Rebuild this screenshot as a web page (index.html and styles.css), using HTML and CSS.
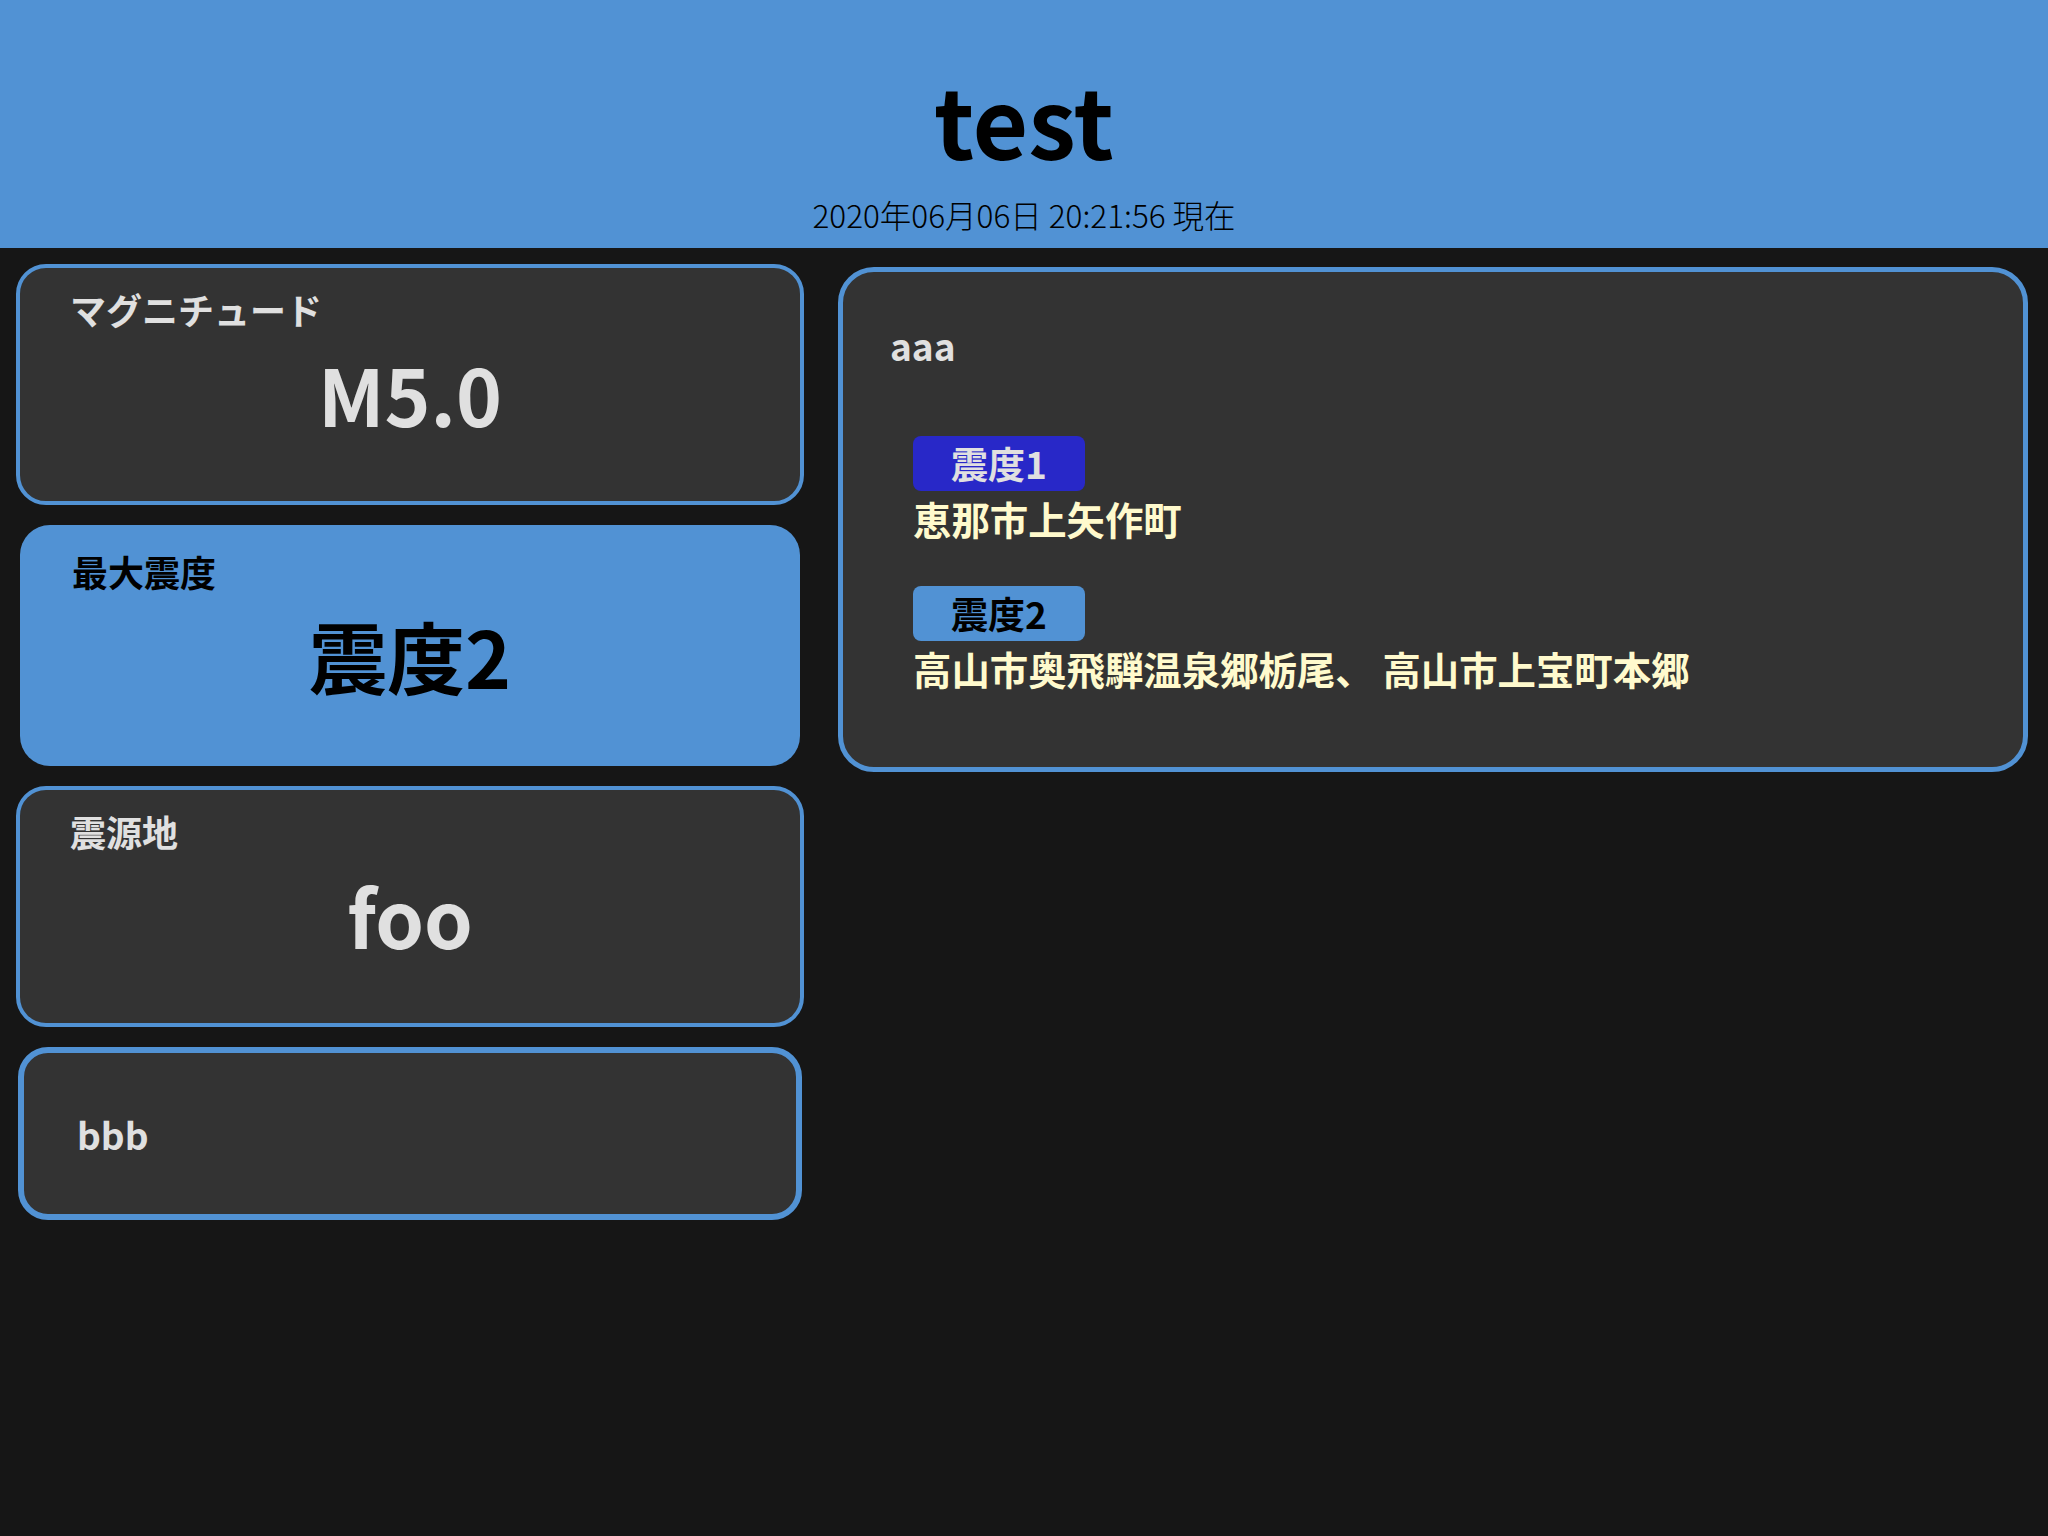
FILE: index.html
```html
<!DOCTYPE html>
<html lang="ja">
<head>
<meta charset="utf-8">
<title>test</title>
<link rel="stylesheet" href="styles.css">
</head>
<body>
<header class="header">
  <h1 class="title">test</h1>
  <div class="date">2020年06月06日 20:21:56 現在</div>
</header>
<main class="main">
  <section class="left">
    <div class="card card-mag">
      <div class="label">マグニチュード</div>
      <div class="value">M5.0</div>
    </div>
    <div class="card card-int">
      <div class="label">最大震度</div>
      <div class="value">震度2</div>
    </div>
    <div class="card card-epi">
      <div class="label">震源地</div>
      <div class="value">foo</div>
    </div>
    <div class="card card-bbb">
      <div class="plain">bbb</div>
    </div>
  </section>
  <section class="panel">
    <div class="plain">aaa</div>
    <ul class="areas">
      <li class="area">
        <div class="badge badge-1">震度1</div>
        <div class="places">恵那市上矢作町</div>
      </li>
      <li class="area">
        <div class="badge badge-2">震度2</div>
        <div class="places">高山市奥飛騨温泉郷栃尾、 高山市上宝町本郷</div>
      </li>
    </ul>
  </section>
</main>
</body>
</html>
```
FILE: styles.css
```css
* { box-sizing: border-box; }

html, body {
  margin: 0;
  padding: 0;
  background: #161616;
  font-family: "Noto Sans CJK JP", "Noto Sans", sans-serif;
  color: #e0e0e0;
}

.header {
  background: #5192d4;
  height: 248px;
  padding-top: 47px;
  text-align: center;
  color: #000;
}

.title {
  margin: 0;
  font-size: 96px;
  line-height: 144px;
  font-weight: 700;
}

.date {
  font-size: 31.5px;
  line-height: 46px;
  font-weight: 300;
}

.main {
  display: flex;
  align-items: flex-start;
  padding-top: 16px;
}

.left {
  width: 820px;
  display: flex;
  flex-direction: column;
  align-items: center;
  gap: 20px;
}

.card {
  background: #333333;
  border-radius: 30px;
}

.card-mag,
.card-epi {
  width: 788px;
  height: 241px;
  border: 4px solid #5192d4;
  padding: 15px 50px 0;
}

.card-int {
  width: 780px;
  height: 241px;
  background: #5192d4;
  padding: 20px 52px 0;
  color: #000;
}

.card-bbb {
  width: 784px;
  height: 173px;
  border: 6px solid #5192d4;
  padding-left: 53px;
  display: flex;
  align-items: center;
}

.label {
  font-size: 36px;
  line-height: 52px;
  font-weight: 700;
}

.value {
  font-size: 78px;
  line-height: 116px;
  font-weight: 700;
  text-align: center;
}

.plain {
  font-size: 37px;
  line-height: 58px;
  font-weight: 700;
}

.panel {
  width: 1190px;
  margin-left: 18px;
  margin-top: 3px;
  background: #333333;
  border: 5px solid #5192d4;
  border-radius: 36px;
  padding: 44px 46px 31px 47px;
}

.areas {
  list-style: none;
  margin: 62px 0 0;
  padding: 0 0 0 23px;
}

.area {
  margin-bottom: 40px;
}

.badge {
  width: 172px;
  height: 55px;
  border-radius: 8px;
  font-size: 37px;
  line-height: 55px;
  font-weight: 700;
  text-align: center;
}

.badge-1 {
  background: #2828c8;
  color: #e0e0e0;
}

.badge-2 {
  background: #5192d4;
  color: #000;
}

.places {
  font-size: 38.4px;
  line-height: 55px;
  font-weight: 700;
  color: #fffacd;
}
```
